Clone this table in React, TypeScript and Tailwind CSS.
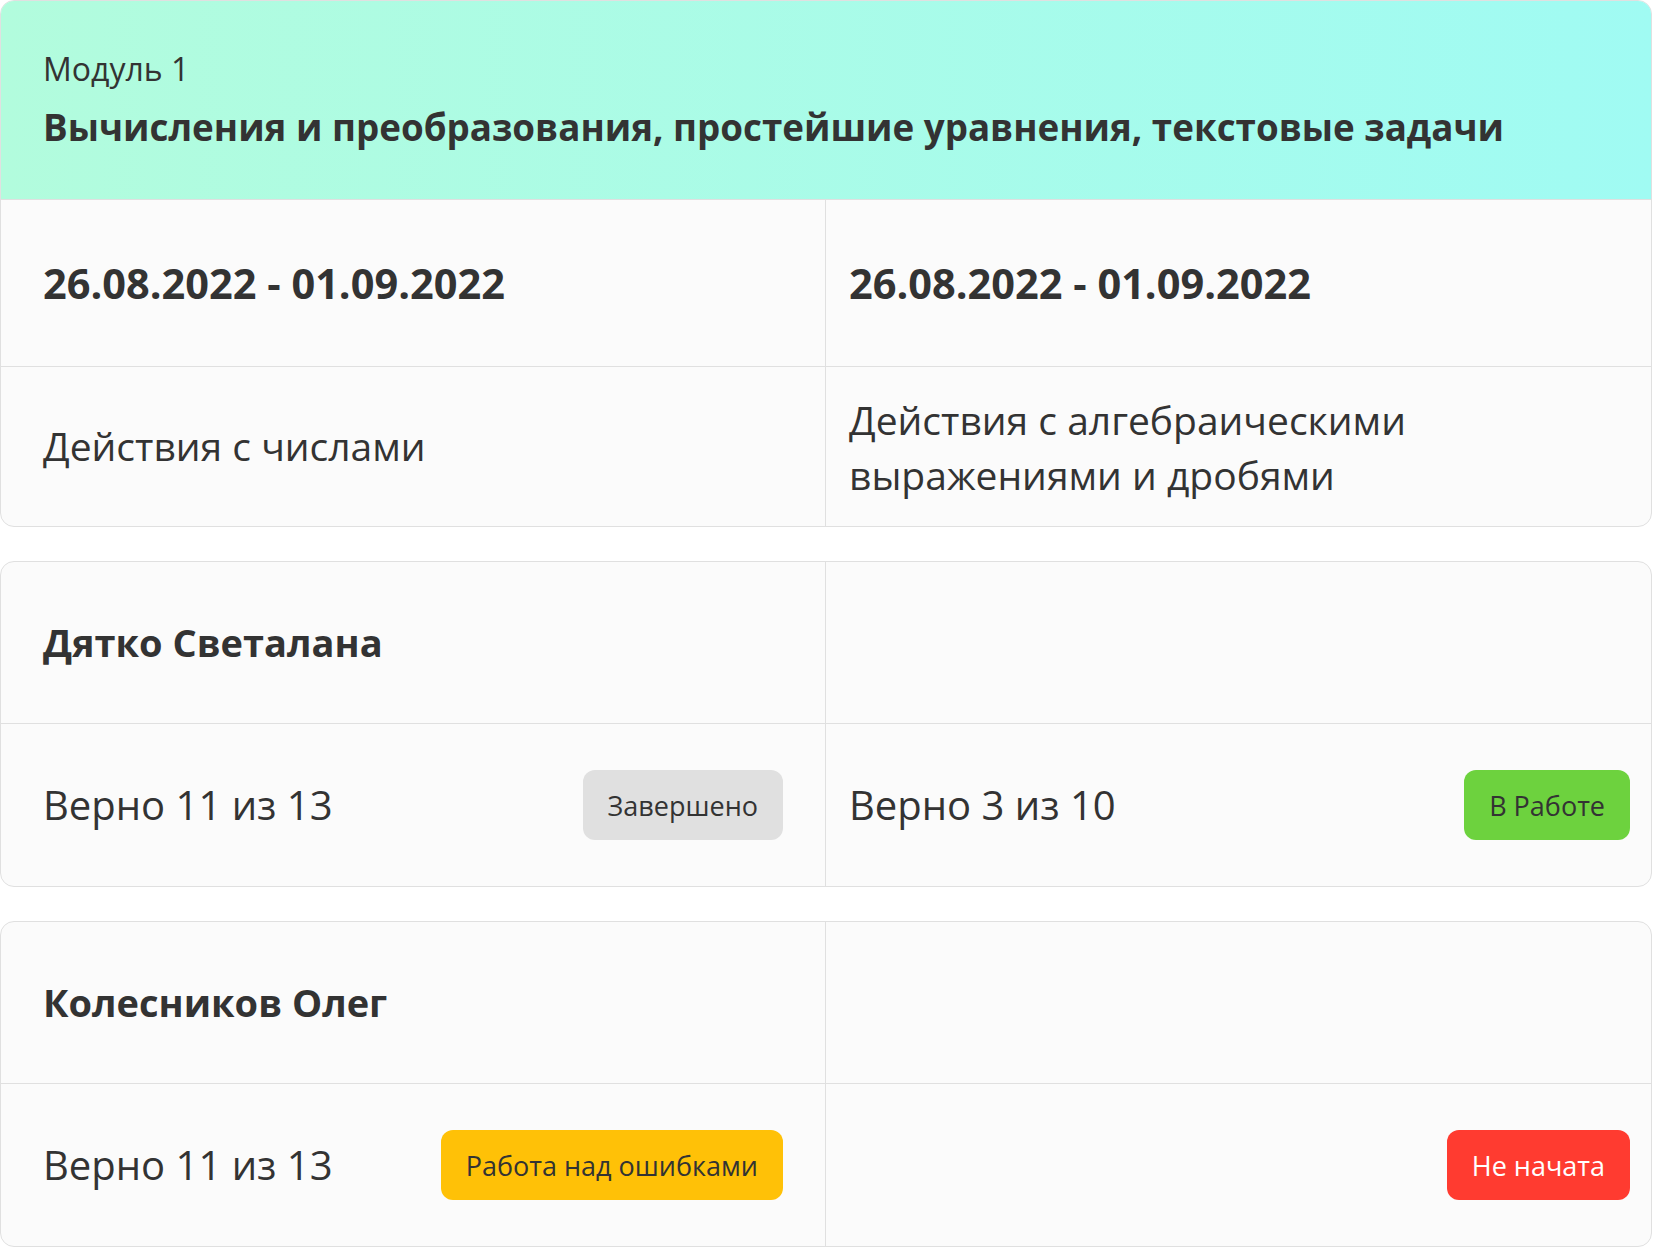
const font = { fontFamily: '"Open Sans", "Noto Sans", sans-serif' };

type Status = 'done' | 'progress' | 'fix' | 'none';

const badgeStyles: Record<Status, string> = {
  done: 'bg-[#e0e0e0] text-[#333333]',
  progress: 'bg-[#6dd23e] text-[#333333]',
  fix: 'bg-[#ffc107] text-[#333333]',
  none: 'bg-[#ff3b30] text-white',
};

const badgeLabels: Record<Status, string> = {
  done: 'Завершено',
  progress: 'В Работе',
  fix: 'Работа над ошибками',
  none: 'Не начата',
};

function Badge({ status }: { status: Status }) {
  return (
    <span className={`flex h-[70px] items-center rounded-[12px] px-[25px] text-[27px] leading-none ${badgeStyles[status]}`}>
      {badgeLabels[status]}
    </span>
  );
}

type Result = { score?: string; status: Status };

const students: { name: string; results: [Result, Result] }[] = [
  {
    name: 'Дятко Светалана',
    results: [
      { score: 'Верно 11 из 13', status: 'done' },
      { score: 'Верно 3 из 10', status: 'progress' },
    ],
  },
  {
    name: 'Колесников Олег',
    results: [
      { score: 'Верно 11 из 13', status: 'fix' },
      { status: 'none' },
    ],
  },
];

function StudentCard({ name, results }: { name: string; results: [Result, Result] }) {
  return (
    <div className="w-[1652px] overflow-hidden rounded-[14px] border border-[#e0e0e0] bg-[#fbfbfb]">
      <div className="grid h-[162px] grid-cols-2 border-b border-[#e0e0e0]">
        <div className="flex items-center border-r border-[#e0e0e0] pl-[42px] text-[38px] font-bold">{name}</div>
        <div />
      </div>
      <div className="grid h-[162px] grid-cols-2">
        {results.map((r, i) => (
          <div
            key={i}
            className={
              i === 0
                ? 'flex items-center justify-between border-r border-[#e0e0e0] pl-[42px] pr-[42px]'
                : 'flex items-center justify-between pl-[23px] pr-[21px]'
            }
          >
            <span className="text-[40px]">{r.score ?? ''}</span>
            <Badge status={r.status} />
          </div>
        ))}
      </div>
    </div>
  );
}

export default function App() {
  return (
    <div className="min-h-screen bg-white text-[#333333]" style={font}>
      <div className="flex flex-col gap-[34px]">
        <div className="w-[1652px] overflow-hidden rounded-[14px] border border-[#e0e0e0] bg-[#fbfbfb]">
          <div className="flex h-[199px] flex-col gap-[12px] border-b border-[#e0e0e0] bg-linear-to-r from-[#b2fcdd] to-[#a0fbf3] pl-[42px] pt-[46px]">
            <div className="text-[32px] leading-[44px]">Модуль 1</div>
            <div className="text-[36.75px] font-bold leading-[48px]">
              Вычисления и преобразования, простейшие уравнения, текстовые задачи
            </div>
          </div>
          <div className="grid h-[167px] grid-cols-2 border-b border-[#e0e0e0]">
            <div className="flex items-center border-r border-[#e0e0e0] pl-[42px] text-[41.5px] font-bold">
              26.08.2022 - 01.09.2022
            </div>
            <div className="flex items-center pl-[23px] text-[41.5px] font-bold">26.08.2022 - 01.09.2022</div>
          </div>
          <div className="grid h-[159px] grid-cols-2">
            <div className="flex items-center border-r border-[#e0e0e0] pl-[42px] text-[39px]">Действия с числами</div>
            <div className="flex items-center pl-[23px] text-[39px] leading-[55px]">
              <div>
                Действия с алгебраическими
                <br />
                выражениями и дробями
              </div>
            </div>
          </div>
        </div>
        {students.map((s) => (
          <StudentCard key={s.name} name={s.name} results={s.results} />
        ))}
      </div>
    </div>
  );
}
